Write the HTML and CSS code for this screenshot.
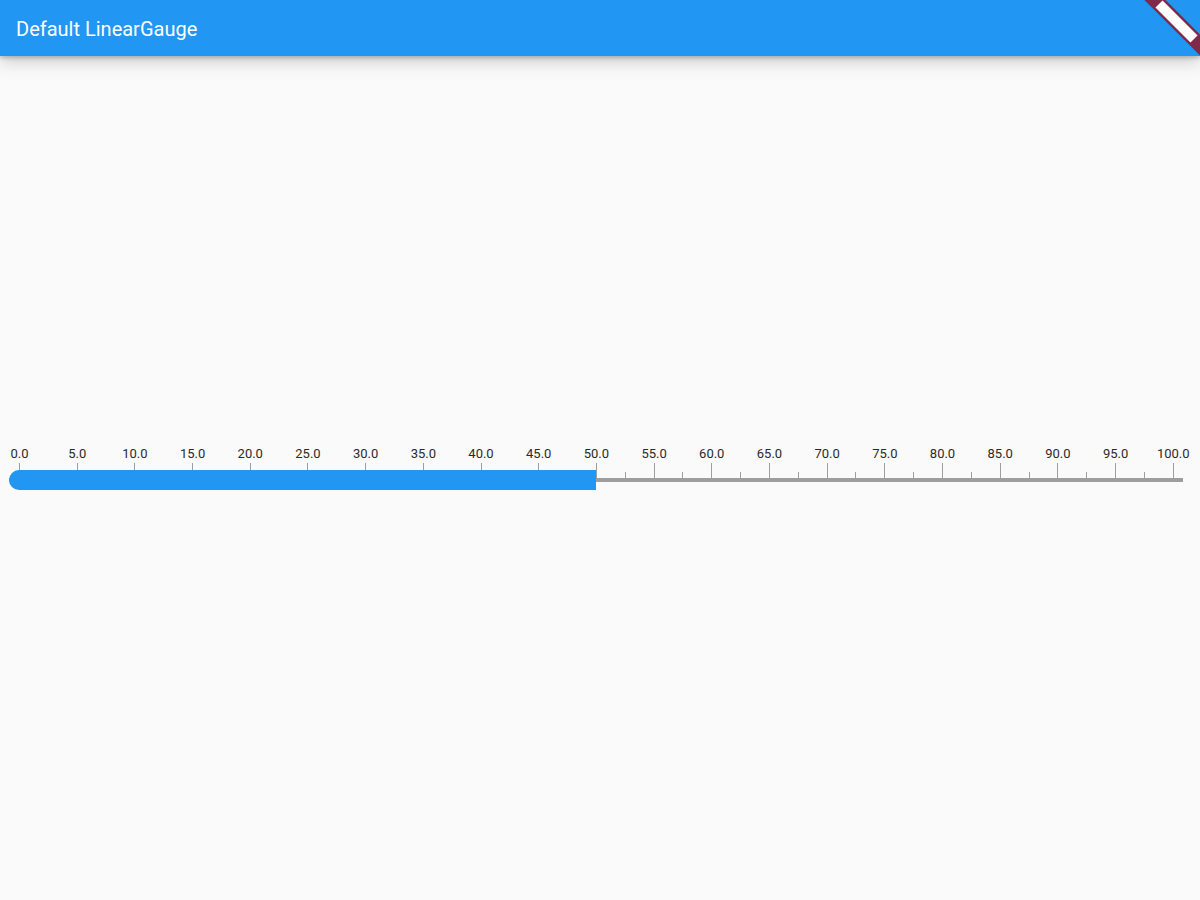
FILE: index.html
```html
<!DOCTYPE html>
<html lang="en">
<head>
<meta charset="utf-8">
<title>Default LinearGauge</title>
<link rel="stylesheet" href="styles.css">
</head>
<body>
<header class="appbar">
  <h1 class="appbar-title">Default LinearGauge</h1>
  <svg class="debug-banner" width="60" height="60" viewBox="0 0 60 60" aria-hidden="true">
    <line x1="-5" y1="-20" x2="80" y2="65" stroke="#80294a" stroke-width="15"/>
    <line x1="19" y1="4" x2="54" y2="39" stroke="#ffffff" stroke-width="10"/>
  </svg>
</header>
<main class="content">
  <div class="gauge">
    <div class="scale">
      <div class="mark major"><span class="label">0.0</span><span class="tick"></span></div>
      <div class="mark minor"><span class="tick"></span></div>
      <div class="mark major"><span class="label">5.0</span><span class="tick"></span></div>
      <div class="mark minor"><span class="tick"></span></div>
      <div class="mark major"><span class="label">10.0</span><span class="tick"></span></div>
      <div class="mark minor"><span class="tick"></span></div>
      <div class="mark major"><span class="label">15.0</span><span class="tick"></span></div>
      <div class="mark minor"><span class="tick"></span></div>
      <div class="mark major"><span class="label">20.0</span><span class="tick"></span></div>
      <div class="mark minor"><span class="tick"></span></div>
      <div class="mark major"><span class="label">25.0</span><span class="tick"></span></div>
      <div class="mark minor"><span class="tick"></span></div>
      <div class="mark major"><span class="label">30.0</span><span class="tick"></span></div>
      <div class="mark minor"><span class="tick"></span></div>
      <div class="mark major"><span class="label">35.0</span><span class="tick"></span></div>
      <div class="mark minor"><span class="tick"></span></div>
      <div class="mark major"><span class="label">40.0</span><span class="tick"></span></div>
      <div class="mark minor"><span class="tick"></span></div>
      <div class="mark major"><span class="label">45.0</span><span class="tick"></span></div>
      <div class="mark minor"><span class="tick"></span></div>
      <div class="mark major"><span class="label">50.0</span><span class="tick"></span></div>
      <div class="mark minor"><span class="tick"></span></div>
      <div class="mark major"><span class="label">55.0</span><span class="tick"></span></div>
      <div class="mark minor"><span class="tick"></span></div>
      <div class="mark major"><span class="label">60.0</span><span class="tick"></span></div>
      <div class="mark minor"><span class="tick"></span></div>
      <div class="mark major"><span class="label">65.0</span><span class="tick"></span></div>
      <div class="mark minor"><span class="tick"></span></div>
      <div class="mark major"><span class="label">70.0</span><span class="tick"></span></div>
      <div class="mark minor"><span class="tick"></span></div>
      <div class="mark major"><span class="label">75.0</span><span class="tick"></span></div>
      <div class="mark minor"><span class="tick"></span></div>
      <div class="mark major"><span class="label">80.0</span><span class="tick"></span></div>
      <div class="mark minor"><span class="tick"></span></div>
      <div class="mark major"><span class="label">85.0</span><span class="tick"></span></div>
      <div class="mark minor"><span class="tick"></span></div>
      <div class="mark major"><span class="label">90.0</span><span class="tick"></span></div>
      <div class="mark minor"><span class="tick"></span></div>
      <div class="mark major"><span class="label">95.0</span><span class="tick"></span></div>
      <div class="mark minor"><span class="tick"></span></div>
      <div class="mark major"><span class="label">100.0</span><span class="tick"></span></div>
    </div>
    <div class="track">
      <div class="bar" style="width: calc(10px + (100% - 20px) * 0.5);"></div>
    </div>
  </div>
</main>
</body>
</html>
```
FILE: styles.css
```css
html, body {
  margin: 0;
  padding: 0;
}

body {
  background: #fafafa;
  font-family: Roboto, "Liberation Sans", sans-serif;
  width: 1200px;
  height: 900px;
  overflow: hidden;
}

.appbar {
  position: relative;
  z-index: 2;
  height: 56px;
  background: #2196f3;
  display: flex;
  align-items: center;
  padding: 0 16px;
  box-shadow: 0 2px 4px rgba(0, 0, 0, 0.2), 0 6px 16px rgba(0, 0, 0, 0.18);
}

.appbar-title {
  margin: 0;
  padding-top: 2px;
  color: #ffffff;
  font-size: 20px;
  font-weight: 400;
  line-height: 24px;
  letter-spacing: 0;
}

.debug-banner {
  position: absolute;
  top: 0;
  right: 0;
  overflow: hidden;
}

.content {
  padding-top: 390px;
}

.gauge {
  display: flex;
  flex-direction: column;
}

.scale {
  display: flex;
  justify-content: space-between;
  align-items: flex-end;
  margin: 0 26px 0 19px;
  height: 32px;
}

.mark {
  width: 1px;
  display: flex;
  flex-direction: column;
  align-items: center;
}

.label {
  font-size: 13px;
  line-height: 15px;
  color: #2a2a2a;
  white-space: nowrap;
  margin-bottom: 2px;
}

.tick {
  display: block;
  width: 1px;
  background: #9e9e9e;
}

.major .tick {
  height: 15px;
}

.minor .tick {
  height: 6px;
}

.track {
  position: relative;
  height: 4px;
  margin: 0 17px 0 9px;
  background: #9e9e9e;
}

.bar {
  position: absolute;
  left: 0;
  top: -8px;
  height: 20px;
  background: #2196f3;
  border-radius: 10px 0 0 10px;
}
```
